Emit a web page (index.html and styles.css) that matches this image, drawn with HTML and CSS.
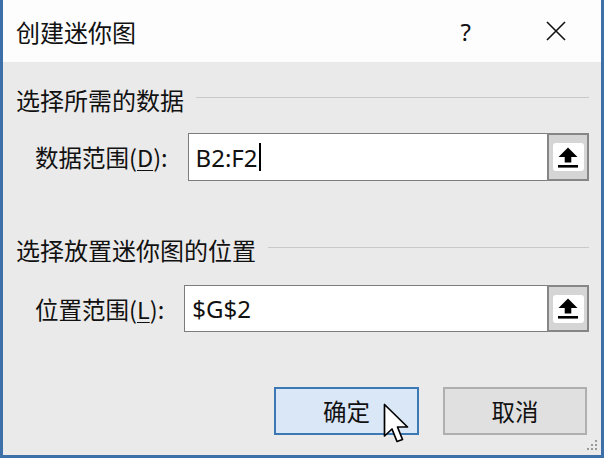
FILE: index.html
```html
<!DOCTYPE html>
<html lang="zh-CN">
<head>
<meta charset="utf-8">
<title>创建迷你图</title>
<link rel="stylesheet" href="styles.css">
</head>
<body>
<div class="dialog">
  <div class="titlebar">
    <span class="title">创建迷你图</span>
    <span class="help">?</span>
    <span class="close">
      <svg width="22" height="22" viewBox="0 0 22 22"><path d="M2 2 L20 20 M20 2 L2 20" stroke="#111" stroke-width="1.6" fill="none"/></svg>
    </span>
  </div>
  <div class="content">
    <div class="group-head"><span>选择所需的数据</span><i class="rule"></i></div>
    <div class="row">
      <label class="lbl">数据范围(<u>D</u>):</label>
      <div class="field"><span class="val">B2:F2</span><span class="caret"></span></div>
      <button class="pick"><span class="pick-in"><svg width="22" height="21" viewBox="0 0 22 21"><path d="M11 0.5 L20.5 10 L14.3 10 L14.3 15.5 L7.7 15.5 L7.7 10 L1.5 10 Z" fill="#000"/><rect x="1" y="18" width="20" height="2.6" fill="#000"/></svg></span></button>
    </div>
    <div class="group-head second"><span>选择放置迷你图的位置</span><i class="rule"></i></div>
    <div class="row">
      <label class="lbl">位置范围(<u>L</u>):</label>
      <div class="field"><span class="val">$G$2</span></div>
      <button class="pick"><span class="pick-in"><svg width="22" height="21" viewBox="0 0 22 21"><path d="M11 0.5 L20.5 10 L14.3 10 L14.3 15.5 L7.7 15.5 L7.7 10 L1.5 10 Z" fill="#000"/><rect x="1" y="18" width="20" height="2.6" fill="#000"/></svg></span></button>
    </div>
    <div class="actions">
      <button class="btn ok">确定</button>
      <button class="btn cancel">取消</button>
    </div>
  </div>
  <svg class="pointer" width="28" height="44" viewBox="0 0 28 44"><path d="M1.5 1.5 L1.5 33 L9 26 L14 38.5 L19.5 36.5 L14.5 24 L24.5 24 Z" fill="#fff" stroke="#000" stroke-width="1.7" stroke-linejoin="round"/></svg>
  <svg class="grip" width="14" height="14" viewBox="0 0 14 14"><g fill="#9a9a9a"><rect x="10" y="1" width="2" height="2"/><rect x="6" y="5" width="2" height="2"/><rect x="10" y="5" width="2" height="2"/><rect x="2" y="9" width="2" height="2"/><rect x="6" y="9" width="2" height="2"/><rect x="10" y="9" width="2" height="2"/></g></svg>
</div>
</body>
</html>
```

FILE: styles.css
```css
* { box-sizing: border-box; }
html, body { margin: 0; padding: 0; }
body {
  width: 604px;
  height: 458px;
  overflow: hidden;
  font-family: "Noto Sans", "Noto Sans CJK SC", sans-serif;
  color: #111;
}
.dialog {
  position: relative;
  width: 604px;
  height: 458px;
  border: 3px solid #3d6fa8;
  border-top: 0;
  background: #ebeaea;
  display: flex;
  flex-direction: column;
}
.titlebar {
  height: 62px;
  background: #fdfdfe;
  display: flex;
  align-items: center;
  padding-left: 13px;
  flex-shrink: 0;
}
.title {
  font-size: 24px;
  font-family: "Noto Sans CJK SC", sans-serif;
}
.help {
  margin-left: auto;
  font-size: 24px;
  margin-right: 74px;
}
.close {
  display: flex;
  margin-right: 34px;
}
.content {
  flex: 1;
  padding: 22px 12px 0 13px;
  display: flex;
  flex-direction: column;
}
.group-head {
  display: flex;
  align-items: center;
  height: 30px;
  font-size: 24px;
  font-family: "Noto Sans CJK SC", sans-serif;
  gap: 12px;
}
.group-head .rule {
  flex: 1;
  height: 1px;
  background: #c9c9c9;
  margin-top: -4px;
}
.group-head.second { margin-top: 53px; }
.row {
  display: flex;
  align-items: center;
  margin-top: 19px;
  padding-left: 19px;
  height: 48px;
}
.group-head.second + .row { margin-top: 21px; height: 47px; }
.lbl {
  font-size: 23.5px;
  font-family: "Noto Sans CJK SC", sans-serif;
  margin-right: 20px;
  white-space: nowrap;
}
.lbl u { text-decoration-thickness: 1px; text-underline-offset: 3px; }
.field {
  flex: 1;
  height: 100%;
  background: #fff;
  border: 1.5px solid #7d7d7d;
  border-right: 0;
  display: flex;
  align-items: center;
  padding-left: 7px;
  font-size: 24px;
}
.val { font-family: "Noto Sans", sans-serif; color: #111; }
.caret {
  width: 2px;
  height: 28px;
  background: #000;
  margin-left: 1px;
}
.pick {
  width: 42px;
  height: 100%;
  padding: 0;
  background: #d5d5d5;
  border: 2px solid #868686;
  display: flex;
  align-items: center;
  justify-content: center;
}
.pick-in {
  width: 31px;
  height: 28px;
  background: #fff;
  border-radius: 3px;
  display: flex;
  align-items: center;
  justify-content: center;
}
.actions {
  margin-top: 55px;
  display: flex;
  justify-content: flex-end;
  gap: 24px;
  padding-right: 2px;
}
.btn {
  width: 145px;
  height: 48px;
  font-size: 23.5px;
  font-family: "Noto Sans CJK SC", sans-serif;
  color: #111;
  padding: 0;
}
.ok {
  background: #dae7f6;
  border: 2px solid #3b78b4;
}
.cancel {
  width: 144px;
  background: #e0e0e0;
  border: 2px solid #afafaf;
}
.pointer {
  position: absolute;
  left: 380px;
  top: 403px;
}
.grip {
  position: absolute;
  right: 2px;
  bottom: 2px;
}
```
